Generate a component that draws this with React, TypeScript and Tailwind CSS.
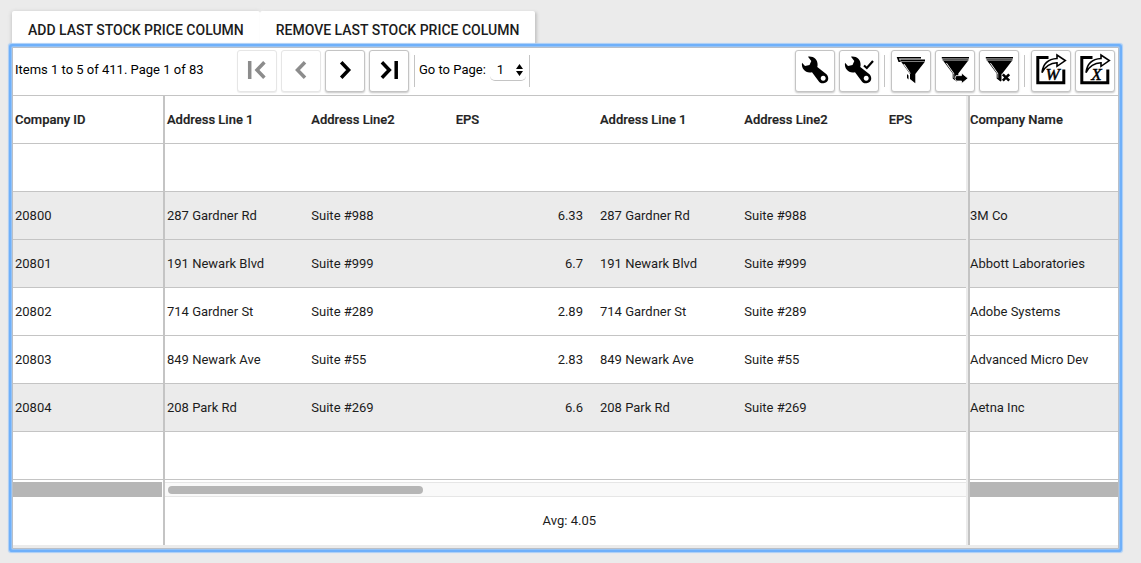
import React from "react";

const FONT = "font-['Roboto','Liberation_Sans',sans-serif]";

const companies = [
  { id: "20800", address: "287 Gardner Rd", suite: "Suite #988", eps: "6.33", name: "3M Co", shaded: true },
  { id: "20801", address: "191 Newark Blvd", suite: "Suite #999", eps: "6.7", name: "Abbott Laboratories", shaded: true },
  { id: "20802", address: "714 Gardner St", suite: "Suite #289", eps: "2.89", name: "Adobe Systems", shaded: false },
  { id: "20803", address: "849 Newark Ave", suite: "Suite #55", eps: "2.83", name: "Advanced Micro Dev", shaded: false },
  { id: "20804", address: "208 Park Rd", suite: "Suite #269", eps: "6.6", name: "Aetna Inc", shaded: true },
];

type Cell = { text: string; right?: boolean };
type PaneProps = { label: string; headers: string[]; rows: Cell[][]; wide?: boolean; flush?: boolean };

function PaneTable({ label, headers, rows, wide, flush }: PaneProps) {
  const left = flush ? "pl-0" : "pl-[2px]";
  return (
    <table aria-label={label} className={`table-fixed border-collapse text-left text-[#1c1c1c] ${wide ? "w-[866px]" : "w-full"}`}>
      <thead>
        <tr className="h-12 shadow-[inset_0_-1px_0_#c4c4c4]">
          {headers.map((h, i) => (
            <th key={i} scope="col" className={`${left} py-0 font-medium text-[#222] [-webkit-text-stroke:0.2px]`}>{h}</th>
          ))}
        </tr>
        <tr className="h-12 shadow-[inset_0_-1px_0_#c4c4c4]">
          <td colSpan={headers.length} />
        </tr>
      </thead>
      <tbody>
        {rows.map((row, r) => (
          <tr key={r} className={`h-12 shadow-[inset_0_-1px_0_#c4c4c4] ${companies[r].shaded ? "bg-[#ebebeb]" : "bg-white"}`}>
            {row.map((c, i) => (
              <td key={i} className={`${left} py-0 ${c.right ? "pr-[15px] text-right" : ""}`}>{c.text}</td>
            ))}
          </tr>
        ))}
        <tr className="h-12 shadow-[inset_0_-1px_0_#c4c4c4]">
          <td colSpan={headers.length} />
        </tr>
      </tbody>
    </table>
  );
}

function ToolButton({ label, disabled, children }: { label: string; disabled?: boolean; children: React.ReactNode }) {
  return (
    <button
      type="button"
      aria-label={label}
      disabled={disabled}
      className={`flex h-[42px] w-10 items-center justify-center rounded-[3px] border bg-white pb-[2px] ${
        disabled ? "border-[#e6e6e6] text-[#8c8c8c] shadow-[0_1px_1px_#ececec]" : "border-[#c4c4c4] text-black shadow-[0_1px_2px_#c4c4c4]"
      }`}
    >
      {children}
    </button>
  );
}

function Divider() {
  return <span className="h-8 w-px bg-[#c4c4c4]" />;
}

function Arrow({ d }: { d: string }) {
  return (
    <svg width="24" height="24" viewBox="0 0 24 24" fill="none" stroke="currentColor" strokeWidth="3.5">
      <path d={d} />
    </svg>
  );
}

function Wrench({ check }: { check?: boolean }) {
  return (
    <svg className="shrink-0" width="30" height="30" viewBox="0 0 30 30" fill="none">
      <path
        fill="currentColor"
        fillRule="evenodd"
        transform={check ? "translate(-1 0)" : undefined}
        d="M8 1.7 C13 0.8 18 4.5 17.6 10 L17.3 12 L26.5 19.3 C29.5 22.5 28.8 27.8 23.5 28.3 C21 28.5 19.5 27.5 18.5 26 L12 17.2 C6 18.8 1 14 2 7.8 L5 11 L9.5 10 L11.3 6 Z M23.2 20.8 a2.5 2.5 0 1 0 0.01 0 Z"
      />
      {check && <path d="M20 10.5 L22.8 13 L29 6" stroke="currentColor" strokeWidth="2.2" />}
    </svg>
  );
}

function Funnel({ kind }: { kind: "stack" | "go" | "clear" }) {
  if (kind === "stack") {
    return (
      <svg className="shrink-0" width="30" height="30" viewBox="0 0 30 30">
        <path fill="currentColor" d="M0.7 2 H25 V3.6 H3 L4.5 7 H2.5 Z M4.3 4.4 H29 V6.5 H4.3 Z M5.3 7 H28.7 L19.3 19 V28.3 L14 24 V19 Z M11 19 L12.5 20.5 V24.5 L11 23 Z" />
        <path fill="#fff" d="M7.2 9 L8.7 9.3 L14.8 18.5 L14 18.5 Z" />
      </svg>
    );
  }
  return (
    <svg className="shrink-0" width="30" height="30" viewBox="0 0 30 30">
      <path fill="currentColor" d="M1.8 2 H29 V3.6 H1.8 Z M3 5.6 H28.3 L18.3 18.5 V25.5 L16.5 26.5 L12.7 23.5 V18.5 Z" />
      <path fill="#555" d="M2.5 3.6 H28.5 V5.6 H2.5 Z" />
      <path fill="#fff" d="M5.8 8 L7 8.2 L14.2 18.5 V23.3 L13.6 22.7 V19 Z" />
      {kind === "go" ? (
        <path d="M16 20.6 H21.5 V18 L28 23.3 L21.5 28.6 V26 H16 L15 23.3 Z" fill="currentColor" stroke="#fff" strokeWidth="0.8" />
      ) : (
        <>
          <path d="M17.5 18.8 H27 V27 H17.5 Z" fill="#fff" />
          <path d="M18.8 19.3 L25.2 25.7 M25.2 19.3 L18.8 25.7" stroke="currentColor" strokeWidth="2.6" />
        </>
      )}
    </svg>
  );
}

function ExportIcon({ letter }: { letter: string }) {
  return (
    <svg className="shrink-0 overflow-visible" width="30" height="30" viewBox="0 0 30 30" fill="none" stroke="currentColor">
      <path d="M12.5 2.5 H1.8 V27.8 H27.8 V14.5" strokeWidth="3" />
      <path d="M6 17.5 C7 9 12 4 21 3.5 V0 L29.3 5.6 L21 11.3 V7.8 C14 8 9.5 11 6 17.5 Z" fill="#fff" strokeWidth="1.6" />
      <text x="16.5" y="25.3" textAnchor="middle" fill="currentColor" strokeWidth="0.5" fontFamily="Liberation Serif, serif" fontSize="17" fontStyle="italic">{letter}</text>
    </svg>
  );
}

export default function App() {
  return (
    <main className={`min-h-screen bg-[#ebebeb] pt-[11px] pr-[22px] pb-[14px] pl-3 text-[13px] leading-4 text-black ${FONT}`}>
      <div className="flex text-sm font-medium text-[#1c1c1c]">
        <button type="button" className="h-9 rounded-t-[2px] bg-white px-4 pt-[2px] whitespace-nowrap shadow-[0_1px_4px_#bbb]">ADD LAST STOCK PRICE COLUMN</button>
        <button type="button" className="h-9 rounded-t-[2px] bg-white px-4 pt-[2px] whitespace-nowrap shadow-[2px_1px_3px_#c4c4c4]">REMOVE LAST STOCK PRICE COLUMN</button>
      </div>

      <section className="relative rounded-[1px] border border-[#b9bfc8] bg-[#ebebeb] pb-[3px] shadow-[0_0_0_1px_#94c2f5,0_0_0_3px_#6fb0fa,0_0_1px_4px_#a9cef7]">
        <div className="flex h-12 items-center justify-between border-b border-[#c4c4c4] bg-white pr-[3px] pb-px pl-[2px]">
          <div className="flex items-center">
            <span className="w-[222px] pb-[2px] whitespace-nowrap">Items 1 to 5 of 411. Page 1 of 83</span>
            <div className="flex gap-1">
              <ToolButton label="First page" disabled><Arrow d="M4.7 3 V21 M19.4 4.3 L12 12 L19.4 19.7" /></ToolButton>
              <ToolButton label="Previous page" disabled><Arrow d="M16 4.3 L8.5 12 L16 19.7" /></ToolButton>
              <ToolButton label="Next page"><Arrow d="M8.2 4.3 L15.6 12 L8.2 19.7" /></ToolButton>
              <ToolButton label="Last page"><Arrow d="M4.9 4.3 L12.3 12 L4.9 19.7 M19.2 3 V21" /></ToolButton>
            </div>
            <div className="ml-[5px] flex items-center">
              <Divider />
              <label htmlFor="page" className="pb-[2px] pl-1 whitespace-nowrap">Go to Page:</label>
              <div className="relative ml-1 pb-[2px]">
                <select id="page" defaultValue="1" className="h-[22px] w-9 appearance-none rounded-[5px] border-b border-[#c4c4c4] bg-white pl-[7px]">
                  <option>1</option>
                  <option>2</option>
                  <option>3</option>
                </select>
                <svg className="pointer-events-none absolute top-[5px] right-[3px]" width="7" height="12" viewBox="0 0 7 12" fill="currentColor">
                  <path d="M0 5 L3.5 0 L7 5 Z M0 7 L3.5 12 L7 7 Z" />
                </svg>
              </div>
              <span className="w-[3px]" />
              <Divider />
            </div>
          </div>
          <div className="flex items-center gap-1">
            <ToolButton label="Settings"><Wrench /></ToolButton>
            <ToolButton label="Saved settings"><Wrench check /></ToolButton>
            <span className="flex w-1 justify-start pl-px"><Divider /></span>
            <ToolButton label="Filters"><Funnel kind="stack" /></ToolButton>
            <ToolButton label="Apply filter"><Funnel kind="go" /></ToolButton>
            <ToolButton label="Clear filter"><Funnel kind="clear" /></ToolButton>
            <span className="flex w-1 justify-start pl-px"><Divider /></span>
            <ToolButton label="Export to Word"><ExportIcon letter="W" /></ToolButton>
            <ToolButton label="Export to Excel"><ExportIcon letter="X" /></ToolButton>
          </div>
        </div>

        <div className="flex">
          <div className="w-[152px] shrink-0 border-r-2 border-[#c4c4c4] bg-white">
            <PaneTable label="Company identifiers" headers={["Company ID"]} rows={companies.map((c) => [{ text: c.id }])} />
            <div className="mt-[2px] mr-px h-[15px] bg-[#b6b6b6]" />
            <div className="h-12" />
          </div>

          <div className="min-w-0 flex-1 overflow-hidden bg-white">
            <PaneTable
              label="Company details"
              wide
              headers={["Address Line 1", "Address Line2", "EPS", "Address Line 1", "Address Line2", "EPS"]}
              rows={companies.map((c) => [
                { text: c.address },
                { text: c.suite },
                { text: c.eps, right: true },
                { text: c.address },
                { text: c.suite },
                { text: "" },
              ])}
            />
            <div className="mt-[2px] flex h-[15px] items-center border-y border-[#e6e6e6] bg-[#f9f9f9] pl-[3px]">
              <div className="h-2 w-[32%] rounded-full bg-[#b6b6b6]" />
            </div>
            <div className="flex h-12 items-center">
              <span className="w-[431px] text-right text-[#1c1c1c]">Avg: 4.05</span>
            </div>
          </div>

          <div className="w-[152px] shrink-0 border-l-2 border-[#ebebeb]">
            <div className="border-l-2 border-[#c4c4c4] bg-white">
              <PaneTable label="Company names" flush headers={["Company Name"]} rows={companies.map((c) => [{ text: c.name }])} />
              <div className="mt-[2px] h-[15px] bg-[#b6b6b6]" />
              <div className="h-12" />
            </div>
          </div>
        </div>
      </section>
    </main>
  );
}
